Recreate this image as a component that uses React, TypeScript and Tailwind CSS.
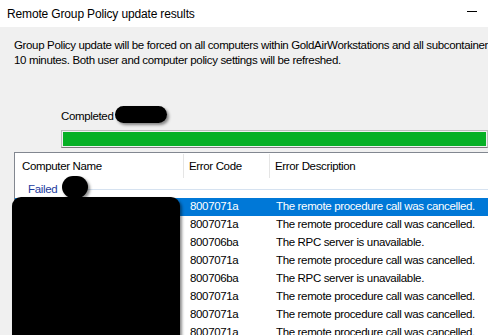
const FONT = { fontFamily: '"Liberation Sans", Arial, sans-serif' }

type Row = { code: string; desc: string; selected?: boolean }

const ROWS: Row[] = [
  { code: '8007071a', desc: 'The remote procedure call was cancelled.', selected: true },
  { code: '8007071a', desc: 'The remote procedure call was cancelled.' },
  { code: '800706ba', desc: 'The RPC server is unavailable.' },
  { code: '8007071a', desc: 'The remote procedure call was cancelled.' },
  { code: '800706ba', desc: 'The RPC server is unavailable.' },
  { code: '8007071a', desc: 'The remote procedure call was cancelled.' },
  { code: '8007071a', desc: 'The remote procedure call was cancelled.' },
  { code: '8007071a', desc: 'The remote procedure call was cancelled.' },
]

export default function App() {
  return (
    <div
      className="relative w-[488px] h-[335px] overflow-hidden bg-[#f0f0f0] text-black flex flex-col"
      style={FONT}
    >
      {/* title bar */}
      <div className="h-[27px] shrink-0 bg-white flex items-center justify-between pl-[7px]">
        <span className="text-[12px] tracking-[-0.15px] leading-none">Remote Group Policy update results</span>
        <div className="w-[10px] h-px bg-black mr-[11px] -mt-[4px]" />
      </div>

      {/* description */}
      <div className="shrink-0 pl-[14px] pt-[11px] text-[11.5px] tracking-[-0.35px] leading-[15px] whitespace-nowrap">
        <p>Group Policy update will be forced on all computers within GoldAirWorkstations and all subcontainers</p>
        <p>10 minutes. Both user and computer policy settings will be refreshed.</p>
      </div>

      {/* progress */}
      <div className="shrink-0 pl-[61px] mt-[41px] text-[11.5px] tracking-[-0.35px] leading-[15px]">Completed</div>
      <div className="ml-[61px] mt-[6px] h-[18px] shrink-0 border border-[#bcbcbc] border-b-[#7a7a7a] p-px">
        <div className="h-full w-full bg-[#06b025]" />
      </div>

      {/* list view */}
      <div className="ml-[14px] mt-[4px] flex-1 min-h-0 overflow-hidden bg-white border-l border-t border-[#828790] text-[11.5px] tracking-[-0.35px]">
        <div className="flex h-[28px] items-start pt-px">
          <div className="w-[169px] pl-[7px] h-[24px] flex items-center pt-[2px] border-r border-[#e5e5e5]">Computer Name</div>
          <div className="w-[86px] pl-[5px] h-[24px] flex items-center pt-[2px] border-r border-[#e5e5e5]">Error Code</div>
          <div className="pl-[5px] h-[24px] flex items-center pt-[2px]">Error Description</div>
        </div>
        <div className="flex items-center h-[17px]">
          <span className="pl-[13px] text-[#1e3c9e]">Failed</span>
          <div className="flex-1 h-px bg-[#d6e2f0] ml-[8px] -mt-px" />
        </div>
        {ROWS.map((r, i) => (
          <div
            key={i}
            className={
              'flex h-[18px] items-center ' + (r.selected ? 'bg-[#0078d7] text-white' : '')
            }
          >
            <div className="w-[169px]" />
            <div className="w-[86px] pl-[6px]">{r.code}</div>
            <div className="pl-[6px] whitespace-nowrap">{r.desc}</div>
          </div>
        ))}
      </div>

      {/* redaction marks */}
      <div className="absolute left-[115px] top-[106px] w-[52px] h-[17px] rounded-full bg-black shadow-[2px_2px_3px_rgba(0,0,0,0.45)]" />
      <div className="absolute left-[62px] top-[176px] w-[26px] h-[22px] rounded-full bg-black shadow-[2px_2px_3px_rgba(0,0,0,0.45)]" />
      <div className="absolute left-[12px] top-[197px] w-[168px] h-[150px] rounded-[9px] bg-black shadow-[2px_2px_3px_rgba(0,0,0,0.45)]" />
    </div>
  )
}
